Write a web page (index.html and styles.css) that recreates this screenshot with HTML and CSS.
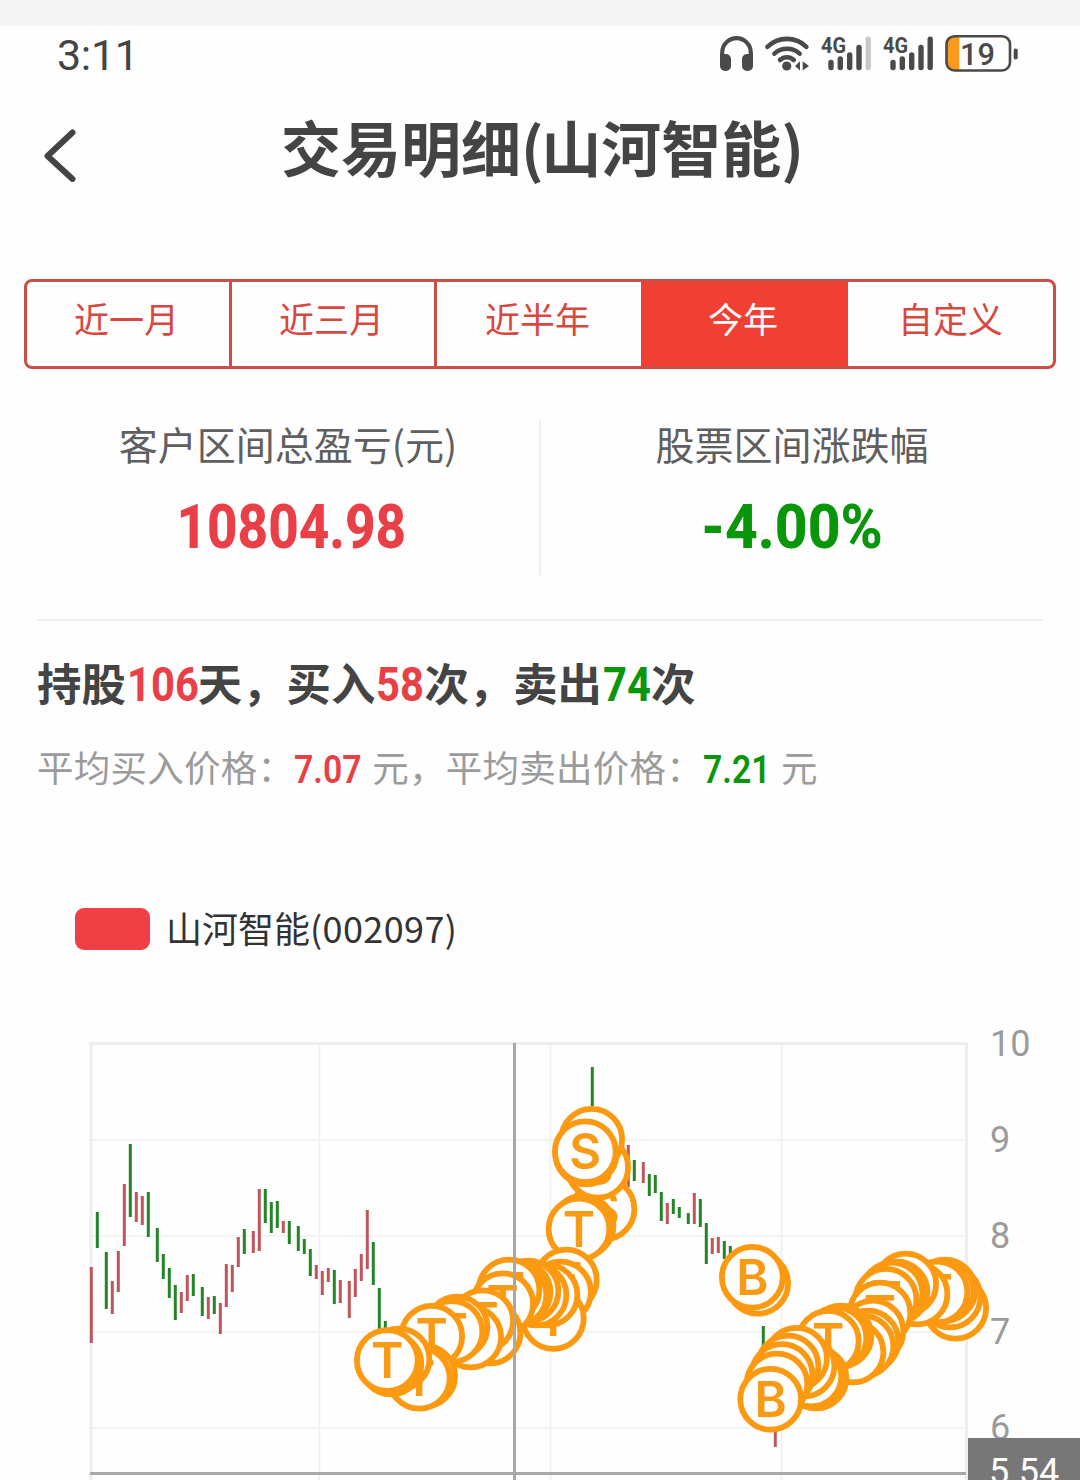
FILE: index.html
```
<!DOCTYPE html>
<html lang="zh-CN">
<head>
    <meta charset="utf-8" />
    <title>交易明细</title>
    <link rel="stylesheet" href="styles.css">
</head>

<body>

    <div class="strip"></div>

    <header class="status">
        <span class="time">3:11</span>
        <div class="statusIcons">
            <svg width="33" height="40" viewBox="0 0 33 40">
                <path class="line" stroke-width="4.2" d="M2.2 27V18.5a14.3 14.3 0 0 1 28.6 0V27" />
                <path class="solid" d="M0 20h6a5 5 0 0 1 5 5v7a5 5 0 0 1-5 5H5a5 5 0 0 1-5-5zM33 20h-6a5 5 0 0 0-5 5v7a5 5 0 0 0 5 5h1a5 5 0 0 0 5-5z" />
            </svg>
            <svg width="44" height="40" viewBox="0 0 44 40">
                <path class="line" stroke-width="4.6" d="M2.4 12.8A28 28 0 0 1 41.4 12.8M9.4 19.6A19 19 0 0 1 34.6 19.6M15 26A10 10 0 0 1 28.8 26" />
                <circle class="solid" cx="21.7" cy="32" r="4.6" />
                <path class="solid" d="M30 32l5-4.7V36.4zM37.7 27.3l6.3 4.7-6.3 4.6z" />
            </svg>
            <svg width="50" height="40" viewBox="0 0 50 40">
                <text class="net" x="0" y="19" textLength="25" lengthAdjust="spacingAndGlyphs">4G</text>
                <path class="line" stroke-width="5.4" d="M10 28.5V33.5M19.3 25V33.5M28.7 21V33.5M38 13.5V33.5" />
                <path class="line faded" stroke-width="5.4" d="M47.2 5.2V33.5" />
            </svg>
            <svg width="50" height="40" viewBox="0 0 50 40">
                <text class="net" x="0" y="19" textLength="25" lengthAdjust="spacingAndGlyphs">4G</text>
                <path class="line" stroke-width="5.4" d="M10 28.5V33.5M19.3 25V33.5M28.7 21V33.5M38 13.5V33.5M47.2 5.2V33.5" />
            </svg>
            <svg width="74" height="40" viewBox="0 0 74 40">
                <path fill="#fb9a1c" d="M14.3 2V36.5H9a7 7 0 0 1-7-7V9a7 7 0 0 1 7-7z" />
                <rect class="line" stroke-width="2.6" x="1.5" y="2.2" width="63.5" height="34.3" rx="8" />
                <path class="line" stroke-width="4" d="M70.7 16.5V23.5" />
                <text class="charge" x="15" y="31" textLength="35" lengthAdjust="spacingAndGlyphs">19</text>
            </svg>
        </div>
    </header>

    <nav class="titleBar">
        <svg class="back" width="34" height="54" viewBox="0 0 34 54">
            <path d="M29.5 4.5L4.5 28L29.5 51" />
        </svg>
        <h1>交易明细<span class="paren">(</span>山河智能<span class="paren">)</span></h1>
    </nav>

    <section class="tabs">
        <button>近一月</button>
        <button>近三月</button>
        <button>近半年</button>
        <button class="active">今年</button>
        <button>自定义</button>
    </section>

    <section class="summary">
        <div class="cell">
            <p>客户区间总盈亏(元)</p>
            <strong class="red">10804.98</strong>
        </div>
        <div class="cell">
            <p>股票区间涨跌幅</p>
            <strong class="green">-4.00%</strong>
        </div>
    </section>

    <section class="detail">
        <h2>
            <span>持股</span><b class="red days">106</b><span>天，</span><span>买入</span><b class="red">58</b><span>次，</span><span>卖出</span><b class="green">74</b><span>次</span>
        </h2>
        <div class="average">
            <span>平均买入价格：</span><b class="red">7.07</b><span>元，</span><span>平均卖出价格：</span><b class="green">7.21</b><span>元</span>
        </div>
    </section>

    <section class="legend">
        <i></i>
        <span>山河智能<span class="code">(002097)</span></span>
    </section>

    <svg id="chart" class="chart" width="1080" height="470" viewBox="0 1010 1080 470"></svg>

    <script src="chart.js"></script>
</body>
</html>
```

FILE: styles.css
```
* {
    box-sizing: border-box;
}

body {
    margin: 0;
    width: 1080px;
    height: 1480px;
    overflow: hidden;
    background: #fefefe;
    color: #444;
    font-family: "Noto Sans CJK SC", sans-serif;
}

h1, h2, p {
    margin: 0;
}

.red {
    color: #e94047;
}

.green {
    color: #0a960a;
}

.strip {
    height: 26px;
    background: #f4f4f4;
}

/* status bar */
.status {
    display: flex;
    justify-content: space-between;
    height: 62px;
    padding: 8px 61px 0 57px;
}

.time {
    font: 400 43px/42px Roboto, sans-serif;
    letter-spacing: -.3px;
}

.statusIcons {
    display: flex;
    gap: 12px;
}

.statusIcons svg {
    overflow: visible;
}

.line {
    fill: none;
    stroke: #4a4a4a;
    stroke-linecap: round;
}

.faded {
    stroke: #c8c8c8;
}

.solid {
    fill: #4a4a4a;
}

.net {
    font: 700 22px Roboto, sans-serif;
    fill: #4a4a4a;
}

.charge {
    font: 500 32px Roboto, sans-serif;
    fill: #4a4a4a;
}

/* title */
.titleBar {
    display: flex;
    align-items: flex-start;
    height: 191px;
    padding: 40px 0 0 43px;
}

.back {
    fill: none;
    stroke: #444;
    stroke-width: 6;
    stroke-linecap: round;
    stroke-linejoin: round;
}

h1 {
    margin-left: 204px;
    font-size: 60px;
    line-height: 60px;
    margin-top: -12px;
    white-space: nowrap;
}

.paren {
    letter-spacing: -2.5px;
}

/* period tabs */
.tabs {
    display: flex;
    height: 90px;
    margin: 0 24px;
    border: 3px solid #cc4f45;
    border-radius: 8px;
    overflow: hidden;
}

.tabs button {
    width: 205px;
    border: 0;
    border-right: 3px solid #cc4f45;
    padding: 0 3px 13px 0;
    background: none;
    color: #d8483f;
    font-family: inherit;
    font-size: 35px;
}

.tabs button:nth-child(3) {
    width: 204px;
    border-right: 0;
}

.tabs button.active {
    width: 207px;
    background: #ef4033;
    border-right: 0;
    color: #fff;
}

.tabs button:last-child {
    flex: 1;
    border-right: 0;
    padding-right: 0;
}

/* profit summary */
.summary {
    display: flex;
    height: 252px;
    margin: 0 37px;
    padding: 52px 0 44px;
    border-bottom: 2px solid #efefef;
}

.cell {
    flex: 1;
    display: flex;
    flex-direction: column;
    align-items: center;
}

.cell:first-child {
    border-right: 2px solid #efefef;
}

.cell p {
    font-size: 39px;
    line-height: 44px;
    color: #5f5f5f;
}

.cell strong {
    margin-top: 26px;
    font: 800 62px/72px Roboto, sans-serif;
    transform: translateX(3px) scaleX(.855);
}

.cell .green {
    transform: scaleX(.92);
}

/* holding detail */
.detail {
    padding: 35px 37px 0;
    height: 288px;
}

h2 {
    display: flex;
    font-size: 44.4px;
    line-height: 52px;
}

h2 b {
    width: 49px;
    font: 700 48px/58px Roboto, sans-serif;
    transform: translateX(1px) scaleX(.87);
    transform-origin: left;
    white-space: nowrap;
}

h2 .days {
    width: 72px;
}

.average {
    display: flex;
    margin-top: 28px;
    font-size: 36.5px;
    line-height: 50px;
    color: #9b9b9b;
}

.average span {
    letter-spacing: .25px;
}

.average b {
    width: 78px;
    font: 600 38px/56px Roboto, sans-serif;
    transform: scaleX(.89);
    transform-origin: left;
}

/* chart legend */
.legend {
    display: flex;
    align-items: center;
    gap: 16px;
    height: 101px;
    padding: 0 0 61px 75px;
    font-size: 36px;
    line-height: 36px;
    color: #333;
    white-space: nowrap;
}

.legend i {
    width: 75px;
    height: 42px;
    border-radius: 9px;
    background: #f04045;
}

.legend > span {
    padding-bottom: 4px;
}

.code {
    letter-spacing: .4px;
}

/* chart */
.chart {
    display: block;
}

.grid {
    stroke: #efefef;
    stroke-width: 1.5;
}

.frame {
    fill: none;
    stroke: #eee;
    stroke-width: 3;
}

.up, .down {
    stroke: #bf565b;
    stroke-width: 3;
}

.down {
    stroke: #248527;
}

.axis {
    font: 400 36px Roboto, sans-serif;
    fill: #9b9b9b;
}

.mark {
    fill: #fefefe;
    stroke: #fb9910;
    stroke-width: 5.8;
}

.letter {
    font: 600 49px Inter, sans-serif;
    fill: #f79a15;
    text-anchor: middle;
}

.cross {
    stroke: #a9a7a7;
    stroke-width: 3;
}

.tip {
    fill: #777;
}

.tipText {
    font: 400 36px Roboto, sans-serif;
    fill: #fff;
}
```

FILE: chart.js
```
const chart = document.querySelector('#chart');

// x, high, low, direction (1 = up, 0 = down)
const candles = [
    [91.3, 1267, 1343, 1], [97.3, 1212, 1248, 0], [106.3, 1252, 1309, 0], [112.3, 1281, 1314, 1],
    [118.3, 1251, 1292, 1], [124.3, 1184, 1246, 1], [130.3, 1144, 1217, 0], [136.3, 1192, 1222, 1],
    [142.3, 1196, 1225, 1], [148.3, 1192, 1237, 0], [157.3, 1228, 1262, 0], [163.3, 1254, 1279, 0],
    [169.3, 1268, 1298, 0], [175.3, 1285, 1320, 0], [181.3, 1292, 1313, 1], [187.3, 1275, 1301, 1],
    [193.3, 1274, 1296, 0], [202.3, 1287, 1316, 0], [208.3, 1297, 1319, 1], [214.3, 1296, 1314, 0],
    [220.3, 1303, 1334, 1], [226.3, 1264, 1307, 1], [232.3, 1265, 1292, 1], [238.3, 1237, 1267, 1],
    [244.3, 1229, 1254, 0], [253.3, 1231, 1253, 1], [259.3, 1189, 1251, 1], [265.3, 1189, 1223, 0],
    [271.3, 1202, 1233, 0], [277.3, 1201, 1228, 0], [283.3, 1221, 1233, 1], [289.3, 1221, 1244, 0],
    [298.3, 1226, 1251, 0], [304.3, 1239, 1254, 0], [310.3, 1249, 1276, 0], [316.3, 1265, 1279, 1],
    [322.3, 1271, 1295, 1], [328.3, 1268, 1282, 1], [334.3, 1270, 1304, 0], [340.3, 1280, 1303, 1],
    [349.3, 1281, 1318, 1], [355.3, 1269, 1297, 1], [361.3, 1254, 1281, 1], [367.3, 1210, 1269, 1],
    [373.3, 1242, 1285, 0], [379.3, 1288, 1335, 0], [385.3, 1321, 1335, 0],
    [592.3, 1067, 1110, 0], [628.3, 1145, 1187, 1], [634.3, 1160, 1181, 0], [643.3, 1162, 1183, 1],
    [649.3, 1174, 1196, 0], [655.3, 1175, 1193, 0], [661.3, 1192, 1221, 0], [667.3, 1203, 1224, 1],
    [673.3, 1199, 1214, 0], [679.3, 1207, 1218, 0], [688.3, 1213, 1224, 0], [694.3, 1193, 1224, 1],
    [700.3, 1199, 1227, 0], [706.3, 1223, 1264, 0], [712.3, 1238, 1254, 1], [718.3, 1237, 1253, 1],
    [724.3, 1241, 1259, 0], [730.3, 1246, 1257, 0], [763.3, 1326, 1350, 0], [775.3, 1425, 1447, 1]
];

// x, y, letter - later ones cover the earlier ones
const marks = [
    [955.7, 1308.3], [950, 1297], [945, 1290], [943, 1291], [937, 1292, 'T'],
    [917, 1294], [905.7, 1284], [897, 1292], [892, 1293], [886, 1299.3, 'T'],
    [880, 1313, 'T'], [873, 1331, 'T'], [868, 1341], [863, 1346],
    [853, 1352], [841, 1336], [836, 1338], [828.3, 1341.3, 'T'],
    [816, 1378], [811, 1376], [804, 1366], [796.5, 1358.3],
    [788, 1366], [782, 1374.5, 'T'], [777, 1384], [770.7, 1399.3, 'B'],
    [757.7, 1283.3], [752.3, 1277.3, 'B'],
    [604, 1209, 'S'], [583, 1226], [579, 1229, 'T'],
    [597.7, 1167.3, 'S'], [591.7, 1139.3], [586, 1154], [585.3, 1151.7, 'S'],
    [566.3, 1280, 'T'], [560.5, 1292, 'T'], [553.3, 1318.5, 'T'], [547, 1295], [536, 1295],
    [528, 1291], [520, 1292], [516, 1295], [509, 1290, 'T'], [502.7, 1303.7, 'T'],
    [490, 1333], [482.7, 1320.7, 'T'], [470.7, 1337], [457, 1327], [452, 1331.5, 'T'],
    [431.7, 1336.3, 'T'], [424.7, 1376], [419.3, 1378.3, 'T'], [399, 1359],
    [391, 1364], [387.3, 1360.5, 'T']
];

function draw(tag, attrs, text) {
    const el = document.createElementNS('http://www.w3.org/2000/svg', tag);
    for (const name in attrs) {
        el.setAttribute(name, attrs[name]);
    }
    if (text) {
        el.textContent = text;
    }
    chart.appendChild(el);
}

function line(cls, x1, y1, x2, y2) {
    draw('line', { class: cls, x1: x1, y1: y1, x2: x2, y2: y2 });
}

// grid
[1140, 1236, 1332, 1428].forEach(y => line('grid', 91, y, 967, y));
[319.5, 550.5, 781.5].forEach(x => line('grid', x, 1043, x, 1480));
draw('path', { class: 'frame', d: 'M91 1480V1043.5H966.5V1480' });

// price axis
[10, 9, 8, 7, 6].forEach((n, i) => {
    draw('text', { class: 'axis', x: 990, y: 1056 + i * 96 }, String(n));
});

candles.forEach(c => line(c[3] ? 'up' : 'down', c[0], c[1], c[0], c[2]));

marks.forEach(m => {
    draw('circle', { class: 'mark', cx: m[0], cy: m[1], r: 30.4 });
    if (m[2]) {
        draw('text', { class: 'letter', x: m[0], y: m[1] + 17.5 }, m[2]);
    }
});

// crosshair with the price label
line('cross', 514.5, 1043, 514.5, 1480);
line('cross', 90, 1473.5, 966, 1473.5);
draw('rect', { class: 'tip', x: 968, y: 1438, width: 112, height: 42 });
draw('text', { class: 'tipText', x: 989, y: 1484 }, '5.54');
```
